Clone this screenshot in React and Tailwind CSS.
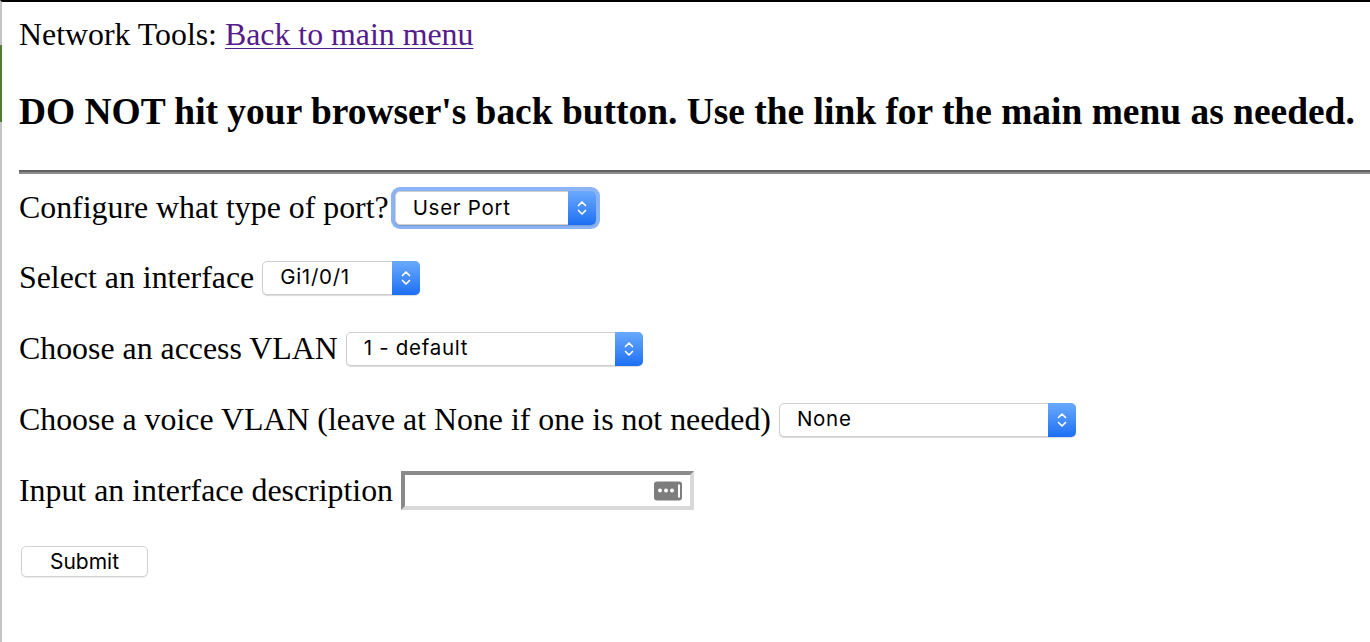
import React from "react";

function Chevrons() {
  return (
    <svg width="10" height="18" viewBox="0 0 10 18" fill="none" stroke="white" strokeWidth="1.7" strokeLinecap="round" strokeLinejoin="round">
      <path d="M1.5 6.5 L5 3 L8.5 6.5" />
      <path d="M1.5 11.5 L5 15 L8.5 11.5" />
    </svg>
  );
}

function FakeSelect({ value, widthClass, focused }) {
  return (
    <div className={focused ? "rounded-[9px] bg-[#8ab4f5] p-[4px] -m-[4px]" : ""}>
      <div
        className={
          "flex h-[34px] items-stretch rounded-[5px] border border-[#cfcfcf] bg-white shadow-[0_1px_1px_rgba(0,0,0,0.15)] " +
          widthClass
        }
      >
        <div className="flex flex-1 items-center pl-[17px] font-['Inter',sans-serif] text-[20.5px] leading-none tracking-[0.035em] text-black">
          {value}
        </div>
        <div className="-my-px -mr-px flex w-[28px] items-center justify-center rounded-r-[5px] bg-gradient-to-b from-[#6aaafc] to-[#1a6ff3]">
          <Chevrons />
        </div>
      </div>
    </div>
  );
}

function Row({ label, children, heightClass, gapClass }) {
  return (
    <div className={"flex items-center " + (gapClass || "gap-[8px] ") + " " + heightClass}>
      <span className="leading-[36px]">{label}</span>
      {children}
    </div>
  );
}

export default function App() {
  return (
    <div className="relative h-[642px] w-full border-l-2 border-t-2 border-l-[#c4c4c4] border-t-black bg-white font-['Liberation_Serif','Times_New_Roman',serif] text-[31.85px] text-black">
      <div className="absolute -left-[2px] top-[43px] h-[77px] w-[2px] bg-[#4f7d35]" />
      <div className="pl-[17px] pt-[15px]">
        <div className="leading-[36px]">
          Network Tools:{" "}
          <a href="#" className="text-[#551a8b] underline decoration-1 underline-offset-[3px]">
            Back to main menu
          </a>
        </div>
        <h3 className="mt-[37.5px] whitespace-nowrap text-[37.45px] font-bold leading-[42px]">
          DO NOT hit your browser's back button. Use the link for the main menu as needed.
        </h3>
        <div className="mt-[37.5px] border-b-2 border-t-2 border-b-[#8c8c8c] border-t-[#626262]" />
        <div className="flex flex-col">
          <Row label="Configure what type of port?" heightClass="h-[68px]" gapClass="gap-[6px]">
            <FakeSelect value="User Port" widthClass="w-[201px]" focused />
          </Row>
          <Row label="Select an interface" heightClass="h-[71px]">
            <FakeSelect value="Gi1/0/1" widthClass="w-[158px]" />
          </Row>
          <Row label="Choose an access VLAN" heightClass="h-[71px]">
            <FakeSelect value="1 - default" widthClass="w-[297px]" />
          </Row>
          <Row label="Choose a voice VLAN (leave at None if one is not needed)" heightClass="h-[71px]">
            <FakeSelect value="None" widthClass="w-[297px]" />
          </Row>
          <Row label="Input an interface description" heightClass="h-[71px]">
            <div className="relative h-[39px] w-[293px] border-4 border-b-[#d9d9d9] border-l-[#8a8a8a] border-r-[#d9d9d9] border-t-[#8a8a8a] bg-white">
              <div className="absolute right-[8px] top-1/2 flex h-[19px] w-[28px] -translate-y-1/2 items-center justify-center gap-[2px] rounded-[3px] bg-[#7d7d7d] pl-[1px]">
                <span className="h-[4px] w-[4px] rounded-full bg-white" />
                <span className="h-[4px] w-[4px] rounded-full bg-white" />
                <span className="h-[4px] w-[4px] rounded-full bg-white" />
                <span className="ml-[2px] h-[13px] w-[2px] bg-white" />
              </div>
            </div>
          </Row>
          <div className="flex h-[71px] items-center">
            <button className="ml-[2px] h-[31px] w-[127px] rounded-[5px] border border-[#d2d2d2] bg-white font-['Inter',sans-serif] text-[21px] leading-none text-black shadow-[0_1px_1px_rgba(0,0,0,0.08)]">
              Submit
            </button>
          </div>
        </div>
      </div>
    </div>
  );
}
